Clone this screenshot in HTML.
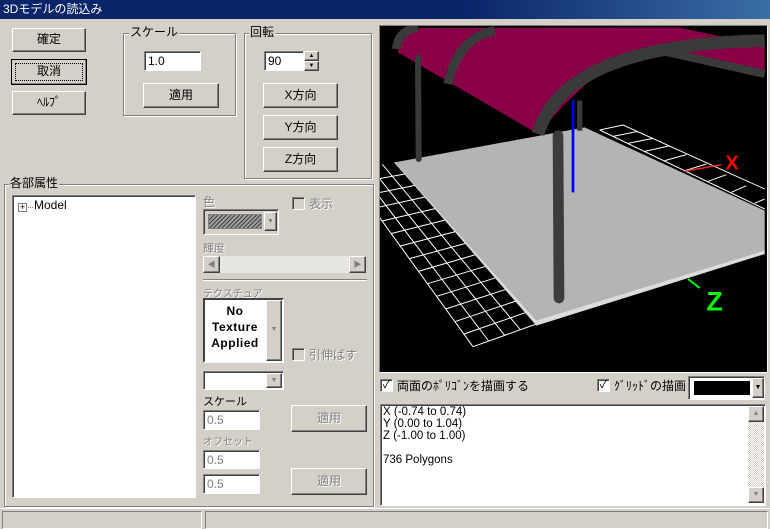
<!DOCTYPE html>
<html><head><meta charset="utf-8"><style>
*{box-sizing:border-box}
body{margin:0;width:770px;height:529px;background:#d4d0c8;font-family:"Liberation Sans","Noto Sans CJK JP",sans-serif;font-size:12px;color:#000;position:relative;overflow:hidden}
.a{position:absolute}
.title{left:0;top:0;width:770px;height:19px;background:linear-gradient(90deg,#0a246a,#0a246a 60%,#3a6ea5);color:#fff;font-size:12px;line-height:19px;padding-left:3px}
.btn{position:absolute;background:#d4d0c8;border:1px solid;border-color:#fff #404040 #404040 #fff;box-shadow:inset -1px -1px 0 #808080;text-align:center;font-size:12px}
.dis{color:#808080;text-shadow:1px 1px 0 #fff}
.grp{position:absolute;border:1px solid #808080;box-shadow:1px 1px 0 #fff, inset 1px 1px 0 #fff}
.gl{position:absolute;background:#d4d0c8;padding:0 1px;font-size:12px;line-height:13px}
.inp{position:absolute;background:#fff;border:1px solid;border-color:#808080 #fff #fff #808080;box-shadow:inset 1px 1px 0 #404040;font-size:12px;padding:2px 0 0 3px}
.inp.d{background:#d4d0c8;color:#808080}
.inp.w{background:#fff;color:#808080}
.cb{position:absolute;width:13px;height:13px;background:#fff;border:1px solid;border-color:#808080 #fff #fff #808080;box-shadow:inset 1px 1px 0 #404040}
.cb.d{background:#d4d0c8}
</style></head><body>
<div class="a title">3Dモデルの読込み</div>

<div class="btn" style="left:12px;top:28px;width:74px;height:24px;line-height:21px">確定</div>
<div class="btn" style="left:11px;top:59px;width:76px;height:26px;line-height:23px;border:1px solid #000;"><div style="position:absolute;left:3px;top:3px;right:3px;bottom:3px;border:1px dotted #000"></div>取消</div>
<div class="btn" style="left:12px;top:91px;width:74px;height:24px;line-height:21px">ﾍﾙﾌﾟ</div>

<div class="grp" style="left:123px;top:33px;width:113px;height:83px"></div>
<div class="gl" style="left:129px;top:26px">スケール</div>
<div class="inp" style="left:144px;top:51px;width:57px;height:20px">1.0</div>
<div class="btn" style="left:143px;top:83px;width:76px;height:25px;line-height:22px">適用</div>

<div class="grp" style="left:244px;top:33px;width:128px;height:146px"></div>
<div class="gl" style="left:249px;top:26px">回転</div>
<div class="inp" style="left:264px;top:51px;width:40px;height:20px">90</div>
<div class="btn" style="left:304px;top:51px;width:15px;height:10px;font-size:6px;line-height:8px">▲</div>
<div class="btn" style="left:304px;top:61px;width:15px;height:10px;font-size:6px;line-height:8px">▼</div>
<div class="btn" style="left:263px;top:83px;width:75px;height:25px;line-height:22px">X方向</div>
<div class="btn" style="left:263px;top:115px;width:75px;height:25px;line-height:22px">Y方向</div>
<div class="btn" style="left:263px;top:147px;width:75px;height:25px;line-height:22px">Z方向</div>

<div class="grp" style="left:4px;top:184px;width:370px;height:323px"></div>
<div class="gl" style="left:9px;top:177px">各部属性</div>
<div class="inp" style="left:12px;top:195px;width:184px;height:303px;padding:0"></div>
<div class="a" style="left:18px;top:203px;width:9px;height:9px;border:1px solid #808080;background:#fff;font-size:9px;line-height:7px;text-align:center">+</div>
<div class="a" style="left:28px;top:207px;width:5px;border-top:1px dotted #808080"></div>
<div class="a" style="left:34px;top:198px">Model</div>

<div class="a dis" style="left:203px;top:193px">色</div>
<div class="cb d" style="left:292px;top:197px"></div>
<div class="a dis" style="left:309px;top:195px">表示</div>
<div class="inp d" style="left:203px;top:209px;width:76px;height:26px;padding:0"><div style="position:absolute;left:4px;top:4px;width:54px;height:15px;border:1px solid #808080;background:repeating-linear-gradient(135deg,#404040 0 1px,#a0a0a0 1px 3px)"></div><div class="btn" style="left:60px;top:2px;width:13px;height:19px;font-size:7px;line-height:17px;color:#808080">▼</div></div>
<div class="a dis" style="left:203px;top:240px;font-size:11px">輝度</div>
<div class="a" style="left:203px;top:256px;width:163px;height:17px;background:#e8e6e1"></div>
<div class="btn" style="left:203px;top:256px;width:17px;height:17px;font-size:8px;line-height:15px;color:#808080">◀</div>
<div class="btn" style="left:349px;top:256px;width:17px;height:17px;font-size:8px;line-height:15px;color:#808080">▶</div>
<div class="a" style="left:203px;top:279px;width:164px;height:2px;border-top:1px solid #808080;border-bottom:1px solid #fff"></div>
<div class="a dis" style="left:203px;top:285px;font-size:10px">テクスチュア</div>
<div class="a" style="left:203px;top:298px;width:81px;height:65px;background:#fff;border:2px solid;border-color:#404040 #fff #fff #404040"></div>
<div class="a" style="left:205px;top:303px;width:60px;text-align:center;font-weight:bold;font-size:12px;line-height:16px;letter-spacing:.5px">No<br>Texture<br>Applied</div>
<div class="btn" style="left:266px;top:300px;width:16px;height:61px;font-size:7px;line-height:57px;color:#808080">▼</div>
<div class="cb d" style="left:292px;top:348px"></div>
<div class="a dis" style="left:309px;top:346px">引伸ばす</div>
<div class="inp" style="left:203px;top:371px;width:81px;height:19px;padding:0"><div class="btn" style="left:62px;top:1px;width:16px;height:15px;font-size:7px;line-height:13px;color:#808080">▼</div></div>
<div class="a" style="left:203px;top:393px;font-size:11px">スケール</div>
<div class="inp w" style="left:203px;top:410px;width:57px;height:20px">0.5</div>
<div class="btn dis" style="left:291px;top:405px;width:76px;height:27px;line-height:24px">適用</div>
<div class="a dis" style="left:203px;top:433px;font-size:10px">オフセット</div>
<div class="inp w" style="left:203px;top:450px;width:57px;height:19px">0.5</div>
<div class="inp w" style="left:203px;top:474px;width:57px;height:20px">0.5</div>
<div class="btn dis" style="left:291px;top:468px;width:76px;height:27px;line-height:24px">適用</div>

<div class="a" style="left:379px;top:25px;width:389px;height:348px;border:1px solid;border-color:#808080 #fff #fff #808080;background:#000;overflow:hidden">
<svg width="392" height="350" viewBox="3 3 1176 1050" style="position:absolute;left:-1px;top:-1px">
<g stroke="#fff" stroke-width="3" fill="none">
<path d="M-97,440 L285,968 M-60,434 L332,951 M-24,428 L380,934 M13,421 L427,917 M50,415 L475,900"/>
<path d="M-70,478 L80,450 M-42,515 L111,484 M-15,553 L141,519 M12,591 L171,554 M39,629 L202,588 M67,666 L232,623 M94,704 L263,658 M121,742 L293,692 M149,779 L323,727 M176,817 L354,761 M203,855 L384,796 M230,893 L414,831 M258,930 L445,865 M285,968 L475,900"/>
<path d="M665,318 L1160,555 M735,303 L1160,495"/>
<path d="M665,318 L735,303 M705,337 L780,322 M750,358 L825,343 M800,382 L872,366 M860,410 L925,392 M920,440 L985,420 M990,472 L1045,452 M1060,505 L1105,485 M1130,538 L1160,525"/>
</g>
<polygon points="50,415 620,310 1160,560 1160,690 475,900" fill="#b4b4b4"/>
<polygon points="50,415 475,890 1160,680 1160,690 475,905" fill="#dcdcdc"/>
<path d="M920,442 L1030,422" stroke="#f22" stroke-width="4"/>
<text x="1042" y="437" fill="#f00" font-size="60" font-weight="bold" font-family="Liberation Sans">X</text>
<path d="M930,765 L965,792" stroke="#0f0" stroke-width="6"/>
<text x="985" y="860" fill="#0f0" font-size="80" font-weight="bold" font-family="Liberation Sans">Z</text>
<path d="M585,230 L585,505" stroke="#00f" stroke-width="8"/>
<path d="M60,60 L95,12 L900,10 L1160,65 L1160,140 L880,85 L700,110 L560,240 L480,330 L60,85 Z" fill="#8a0048"/>
<path d="M480,330 Q560,60 1160,50" stroke="#3a3a3a" stroke-width="38" fill="none"/>
<path d="M210,180 Q240,40 350,20" stroke="#3a3a3a" stroke-width="28" fill="none"/>
<path d="M55,75 Q60,20 120,10" stroke="#3a3a3a" stroke-width="26" fill="none"/>
<path d="M870,85 L1160,150" stroke="#3a3a3a" stroke-width="24"/>
<path d="M120,100 L122,405" stroke="#3a3a3a" stroke-width="18" stroke-linecap="round"/>
<path d="M605,230 L605,320" stroke="#3a3a3a" stroke-width="16"/>
<path d="M540,335 L543,822" stroke="#3c3c3c" stroke-width="32" stroke-linecap="round"/>
</svg></div>

<div class="cb" style="left:380px;top:379px;font-size:11px;line-height:10px;text-align:center">✓</div>
<div class="a" style="left:397px;top:377px">両面のﾎﾟﾘｺﾞﾝを描画する</div>
<div class="cb" style="left:597px;top:379px;font-size:11px;line-height:10px;text-align:center">✓</div>
<div class="a" style="left:614px;top:377px">ｸﾞﾘｯﾄﾞの描画</div>
<div class="inp" style="left:688px;top:376px;width:77px;height:24px;padding:0"><div style="position:absolute;left:5px;top:4px;width:56px;height:14px;background:#000"></div><div class="btn" style="left:63px;top:1px;width:12px;height:20px;font-size:7px;line-height:18px">▼</div></div>

<div class="inp" style="left:380px;top:404px;width:386px;height:102px;padding:1px 0 0 2px;line-height:12px;font-size:11.5px">X (-0.74 to 0.74)<br>Y (0.00 to 1.04)<br>Z (-1.00 to 1.00)<br><br>736 Polygons
<div style="position:absolute;right:1px;top:1px;width:16px;height:97px;background:repeating-conic-gradient(#d4d0c8 0 25%,#fff 0 50%) 0 0/2px 2px"></div>
<div class="btn" style="right:1px;top:1px;width:16px;height:16px;font-size:7px;line-height:14px;color:#808080">▲</div>
<div class="btn" style="right:1px;top:82px;width:16px;height:16px;font-size:7px;line-height:14px;color:#808080">▼</div>
</div>

<div class="a" style="left:0;top:508px;width:770px;height:1px;background:#fff"></div>
<div class="a" style="left:2px;top:511px;width:200px;height:18px;border:1px solid;border-color:#808080 #fff #fff #808080"></div>
<div class="a" style="left:205px;top:511px;width:563px;height:18px;border:1px solid;border-color:#808080 #fff #fff #808080"></div>
</body></html>
